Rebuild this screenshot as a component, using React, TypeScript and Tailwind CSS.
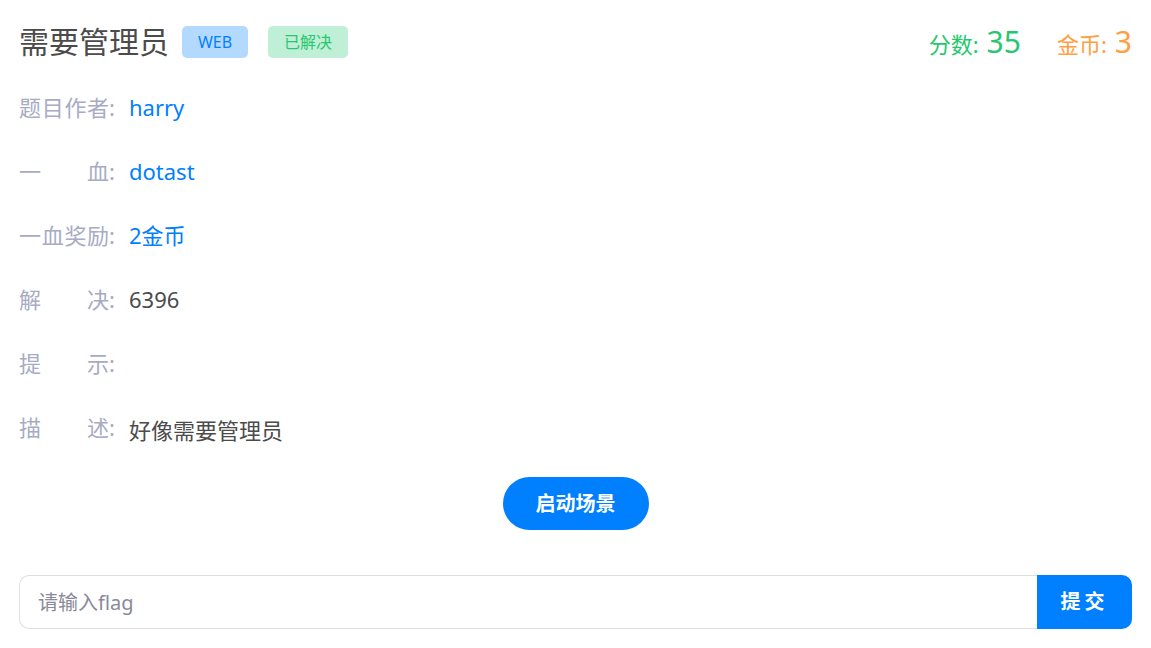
import React from "react";

const font = { fontFamily: '"Noto Sans", "Noto Sans CJK SC", sans-serif' };

function Label({ chars }: { chars: string[] }) {
  return (
    <div className="flex w-[96px] shrink-0 items-start text-[22px] leading-[30px] text-[#a7abc3]">
      <div className="flex flex-1 justify-between">
        {chars.map((c, i) => (
          <span key={i}>{c}</span>
        ))}
      </div>
      <span>:</span>
    </div>
  );
}

function Row({ chars, children, extra = "" }: { chars: string[]; children?: React.ReactNode; extra?: string }) {
  return (
    <div className="flex h-[64px] items-start">
      <Label chars={chars} />
      <div className={"ml-[14px] text-[22px] leading-[30px] " + extra}>{children}</div>
    </div>
  );
}

export default function App() {
  return (
    <div className="min-h-[648px] w-full bg-white px-[19px] pt-[22px]" style={font}>
      <div className="flex h-[40px] items-center justify-between">
        <div className="flex items-center">
          <span className="text-[30px] leading-[40px] text-[#4b4b4b]">需要管理员</span>
          <span className="ml-[13px] flex h-[32px] w-[66px] items-center justify-center rounded-[5px] bg-[#b3d9ff] text-[16px] text-[#0080ff]">
            WEB
          </span>
          <span className="ml-[20px] flex h-[32px] w-[80px] items-center justify-center rounded-[5px] bg-[#bfefd6] text-[16px] text-[#28c76f]">
            已解决
          </span>
        </div>
        <div className="flex items-baseline">
          <span className="text-[22px] text-[#28c76f]">分数:</span>
          <span className="ml-[8px] text-[30px] leading-[40px] text-[#28c76f]">35</span>
          <span className="ml-[36px] text-[22px] text-[#ff9f43]">金币:</span>
          <span className="ml-[8px] text-[30px] leading-[40px] text-[#ff9f43]">3</span>
        </div>
      </div>

      <div className="mt-[30px] flex flex-col">
        <Row chars={["题", "目", "作", "者"]} extra="text-[#0080ff]">harry</Row>
        <Row chars={["一", "血"]} extra="text-[#0080ff]">dotast</Row>
        <Row chars={["一", "血", "奖", "励"]} extra="text-[#0080ff]">2金币</Row>
        <Row chars={["解", "决"]} extra="text-[#4b4b4b]">6396</Row>
        <Row chars={["提", "示"]} extra="text-[#4b4b4b]"></Row>
        <div className="flex items-start">
          <Label chars={["描", "述"]} />
          <div className="ml-[14px] mt-[3px] text-[22px] leading-[30px] text-[#4b4b4b]">好像需要管理员</div>
        </div>
      </div>

      <div className="mt-[32px] flex justify-center">
        <button className="h-[53px] w-[146px] rounded-full bg-[#0080ff] text-[20px] font-bold text-white">
          启动场景
        </button>
      </div>

      <div className="mt-[45px] flex h-[54px]">
        <input
          className="h-full flex-1 rounded-l-[10px] border border-r-0 border-[#dedede] px-[18px] text-[20px] text-[#4b4b4b] outline-none placeholder:text-[#8a8a9a]"
          placeholder="请输入flag"
          style={font}
        />
        <button className="h-full w-[95px] rounded-r-[10px] bg-[#0080ff] text-[20px] font-bold tracking-[4px] text-white">
          提交
        </button>
      </div>
    </div>
  );
}
